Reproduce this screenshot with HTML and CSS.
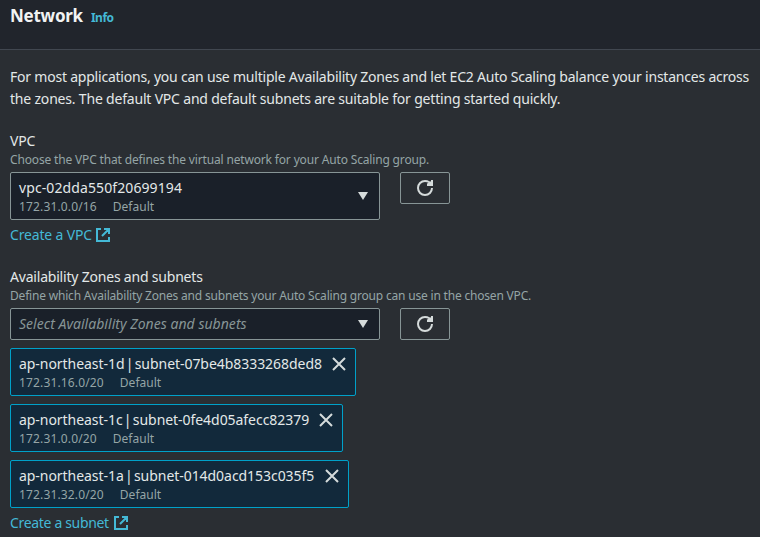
FILE: index.html
```
<!DOCTYPE html>
<html lang="en">
<head>
<meta charset="utf-8">
<title>Network</title>
<link rel="stylesheet" href="styles.css">
</head>
<body>
<svg class="defs" width="0" height="0">
  <symbol id="refresh" viewBox="0 0 16 16"><path d="M10 5h5V0M15 8a7 7 0 1 1-7-7c3 0 5.400 1.600 6.500 4"/><path d="M12 3.500 14.500 2v2.500z"/></symbol>
  <symbol id="ext" viewBox="0 0 14 14"><path d="M5 1H1v12h12V9M8 1h5v5M13 1 6 8"/></symbol>
  <symbol id="close" viewBox="0 0 16 16"><path d="m2 2 12 12M14 2 2 14"/></symbol>
</svg>
<section class="panel">
  <header class="head"><h2>Network</h2><a class="info">Info</a></header>
  <div class="body">
    <p class="intro"><span class="lead">For most applications, you can use multiple Availability Zones and let EC2 Auto Scaling balance your instances across</span><br>the zones. The default VPC and default subnets are suitable for getting started quickly.</p>
    <div class="field">
      <div class="label">VPC</div>
      <div class="hint">Choose the VPC that defines the virtual network for your Auto Scaling group.</div>
      <div class="row">
        <div class="select tall"><div class="value"><div class="main">vpc-02dda550f20699194</div><div class="meta"><span>172.31.0.0/16</span><span>Default</span></div></div><i class="caret"></i></div>
        <button class="refresh"><svg><use href="#refresh"/></svg></button>
      </div>
      <a class="link">Create a VPC<svg><use href="#ext"/></svg></a>
    </div>
    <div class="field">
      <div class="label">Availability Zones and subnets</div>
      <div class="hint wide">Define which Availability Zones and subnets your Auto Scaling group can use in the chosen VPC.</div>
      <div class="row">
        <div class="select"><div class="placeholder">Select Availability Zones and subnets</div><i class="caret"></i></div>
        <button class="refresh"><svg><use href="#refresh"/></svg></button>
      </div>
      <div class="tokens">
        <div class="token t1"><div><div class="main">ap-northeast-1d | subnet-07be4b8333268ded8</div><div class="meta"><span>172.31.16.0/20</span><span>Default</span></div></div><svg><use href="#close"/></svg></div>
        <div class="token t2"><div><div class="main">ap-northeast-1c | subnet-0fe4d05afecc82379</div><div class="meta"><span>172.31.0.0/20</span><span>Default</span></div></div><svg><use href="#close"/></svg></div>
        <div class="token t3"><div><div class="main">ap-northeast-1a | subnet-014d0acd153c035f5</div><div class="meta"><span>172.31.32.0/20</span><span>Default</span></div></div><svg><use href="#close"/></svg></div>
      </div>
      <a class="link subnet">Create a subnet<svg><use href="#ext"/></svg></a>
    </div>
  </div>
</section>
</body>
</html>
```
FILE: styles.css
```
* { box-sizing: border-box; }
body { margin: 0; height: 537px; overflow: hidden; background: #2a2e33; color: #e3e8e8; font: 14px/22px "Noto Sans", sans-serif; }
.defs { position: absolute; }
svg { width: 16px; height: 16px; fill: none; stroke: currentColor; stroke-width: 2; flex: none; }
.head { height: 50px; padding: 5px 10px 0; background: #21252c; border-bottom: 1px solid #414750; display: flex; gap: 8px; }
h2 { margin: 0; font-size: 17px; line-height: 22px; font-weight: 700; letter-spacing: -0.25px; color: #f2f3f3; }
.info { color: #44b9d6; font-size: 12px; line-height: 26px; font-weight: 700; letter-spacing: -0.5px; }
.body { padding: 16px 10px 0; }
.intro { margin: 0 0 20px; white-space: nowrap; letter-spacing: -0.192px; }
.lead { letter-spacing: -0.216px; }
.field { margin-bottom: 20px; }
.label { line-height: 22px; letter-spacing: -0.2px; }
.hint { font-size: 12px; line-height: 16px; color: #95a5a6; margin-bottom: 4px; white-space: nowrap; letter-spacing: -0.16px; }
.wide { letter-spacing: -0.19px; }
.row { display: flex; gap: 20px; align-items: flex-start; }
.select { width: 370px; height: 32px; border: 1px solid #879596; border-radius: 2px; background: #1a2029; padding: 0 11px 0 8px; display: flex; align-items: center; justify-content: space-between; }
.tall { height: 48px; }
.caret { border: 5.500px solid transparent; border-top: 8px solid #d5dbdb; border-bottom: 0; }
.placeholder { font-style: italic; color: #879596; letter-spacing: 0.03px; }
.main { line-height: 22px; white-space: nowrap; }
.value .main { letter-spacing: 0.1px; }
.meta { font-size: 12px; line-height: 16px; color: #95a5a6; display: flex; gap: 16px; }
.meta span:first-child { letter-spacing: 0.15px; }
.refresh { width: 50px; height: 32px; border: 1px solid #879596; border-radius: 2px; background: transparent; color: #d5dbdb; display: flex; align-items: center; justify-content: center; padding: 0; }
.link { color: #44b9d6; display: flex; align-items: center; gap: 4px; margin-top: 4px; line-height: 22px; letter-spacing: -0.17px; }
.link svg { width: 14px; height: 14px; }
.subnet { letter-spacing: -0.33px; gap: 5px; }
.tokens { display: grid; gap: 8px; margin: 8px 0 4px; justify-items: start; }
.token { height: 48px; border: 1px solid #00a1c9; border-radius: 2px; background: #12293b; padding: 4px 8px; display: flex; justify-content: space-between; }
.token .main { letter-spacing: -0.05px; word-spacing: -2.300px; }
.token svg { margin-top: 3px; color: #d5dbdb; }
.t1 { width: 346px; }
.t2 { width: 333px; }
.t3 { width: 339px; }
```
